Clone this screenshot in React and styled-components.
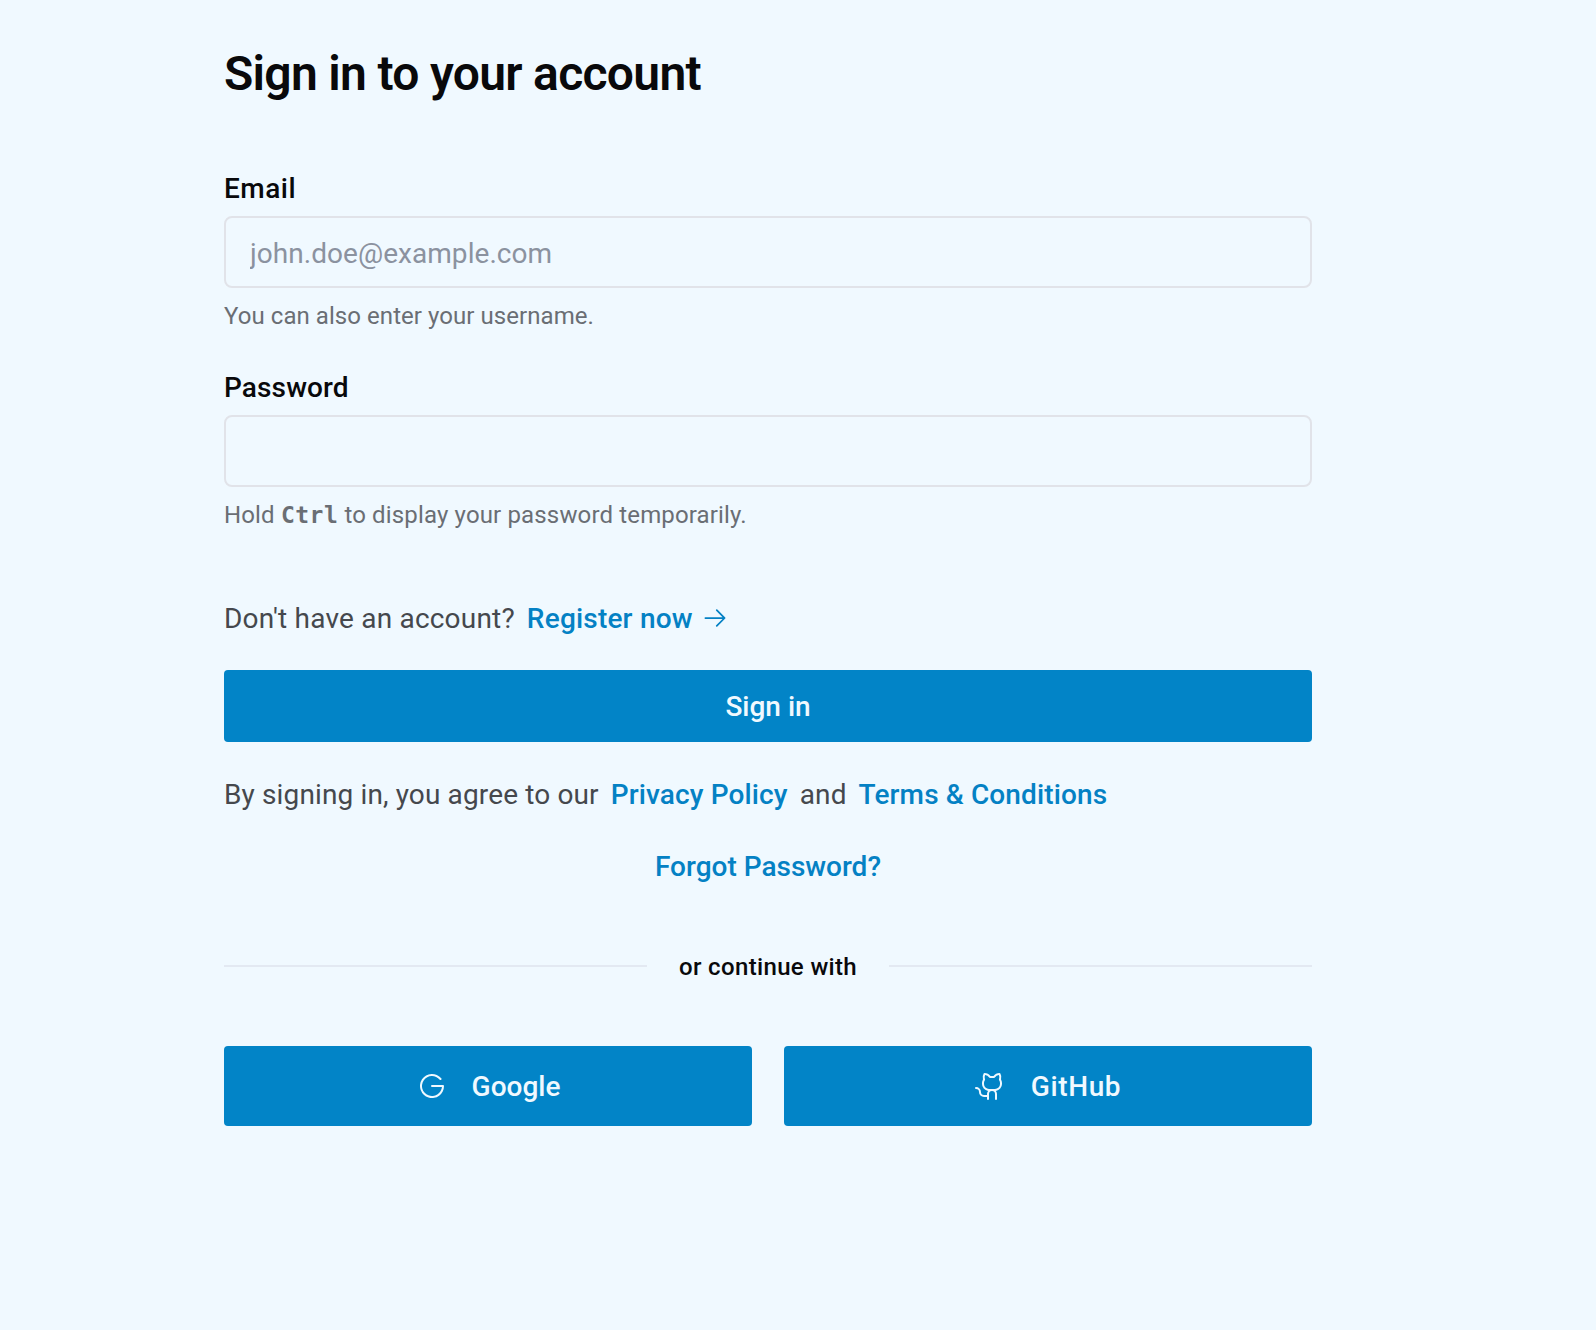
import React, { useState } from 'react';
import styled, { createGlobalStyle } from 'styled-components';
import { PiArrowRight, PiGithubLogo, PiGoogleLogo } from 'react-icons/pi';

const GlobalStyle = createGlobalStyle`
  * {
    box-sizing: border-box;
  }

  body {
    margin: 0;
    background-color: #f0f9ff;
    font-family: Roboto, 'Noto Sans', sans-serif;
  }
`;

// Styled Components
const Page = styled.main`
  min-height: 1330px;
  padding: 46px 284px 0 224px;
  background-color: #f0f9ff;
`;

const Form = styled.form`
  display: flex;
  flex-direction: column;
`;

const Title = styled.h1`
  margin: 0 0 73px;
  font-size: 48px;
  font-weight: 600;
  letter-spacing: -0.7px;
  line-height: 56px;
  color: #09090b;
`;

const Field = styled.div`
  display: flex;
  flex-direction: column;
  margin-bottom: ${props => (props.$last ? '69px' : '42px')};
`;

const Label = styled.label`
  margin-bottom: 13px;
  font-size: 28px;
  font-weight: 500;
  letter-spacing: ${props => props.$spacing || '0'};
  line-height: 28px;
  color: #09090b;
`;

const Input = styled.input`
  height: 72px;
  padding: 2px 24px 0;
  border: 2px solid #e1e3e9;
  border-radius: 8px;
  background-color: transparent;
  font-family: inherit;
  font-size: 28px;
  letter-spacing: 0.05px;
  color: #09090b;
  outline: none;

  &::placeholder {
    color: #8b929f;
    opacity: 1;
  }

  &:focus {
    border-color: #0284c7;
  }
`;

const Hint = styled.p`
  margin: 12px 0 0;
  font-size: 24px;
  letter-spacing: ${props => (props.$wide ? '0.15px' : '0.06px')};
  line-height: 32px;
  color: #6a6e74;
`;

const Key = styled.kbd`
  font-family: 'DejaVu Sans Mono', monospace;
  font-size: 23px;
  font-weight: 700;
  letter-spacing: 0.5px;
  line-height: 1;
`;

const TextRow = styled.div`
  display: flex;
  align-items: center;
  justify-content: ${props => (props.$center ? 'center' : 'flex-start')};
  gap: 12px;
  height: 36px;
  padding-top: 2px;
  font-size: 28px;
  letter-spacing: ${props => props.$spacing || '0'};
  line-height: 36px;
  color: #45484d;
`;

const Link = styled.a`
  display: inline-flex;
  align-items: center;
  gap: 8px;
  font-weight: 500;
  color: #0481c4;
  text-decoration: none;

  svg {
    margin-bottom: 2px;
  }

  &:hover {
    text-decoration: underline;
  }
`;

const Button = styled.button`
  display: flex;
  flex: none;
  align-items: center;
  justify-content: center;
  height: 72px;
  margin: 34px 0;
  padding: 0;
  border: none;
  border-radius: 4px;
  background-color: #0284c7;
  font-family: inherit;
  font-size: 28px;
  font-weight: 500;
  color: #f0f9ff;
  cursor: pointer;

  &:hover {
    background-color: #0369a1;
  }
`;

const SocialButton = styled(Button)`
  flex: 1;
  gap: 24px;
  height: 80px;
  margin: 0;
  letter-spacing: ${props => props.$spacing || '0'};
`;

const ForgotRow = styled(TextRow)`
  margin-top: 36px;
`;

const Divider = styled.div`
  display: flex;
  align-items: center;
  gap: 32px;
  margin: 67px 0 63px;
  font-size: 24px;
  font-weight: 500;
  letter-spacing: 0.35px;
  line-height: 32px;
  color: #09090b;

  &::before,
  &::after {
    content: '';
    flex: 1;
    height: 2px;
    margin-bottom: 2px;
    background-color: #e3e9f2;
  }
`;

const SocialRow = styled.div`
  display: flex;
  gap: 32px;
`;

const App = () => {
  const [email, setEmail] = useState('');
  const [password, setPassword] = useState('');
  const [showPassword, setShowPassword] = useState(false);

  const handleKey = (e) => {
    setShowPassword(e.ctrlKey);
  };

  return (
    <Page>
      <GlobalStyle />
      <Form onSubmit={(e) => e.preventDefault()}>
        <Title>Sign in to your account</Title>
        <Field>
          <Label htmlFor="email" $spacing="0.5px">Email</Label>
          <Input
            id="email"
            type="text"
            placeholder="john.doe@example.com"
            value={email}
            onChange={(e) => setEmail(e.target.value)}
          />
          <Hint>You can also enter your username.</Hint>
        </Field>
        <Field $last>
          <Label htmlFor="password" $spacing="0.13px">Password</Label>
          <Input
            id="password"
            type={showPassword ? 'text' : 'password'}
            value={password}
            onChange={(e) => setPassword(e.target.value)}
            onKeyDown={handleKey}
            onKeyUp={handleKey}
          />
          <Hint $wide>
            Hold <Key>Ctrl</Key> to display your password temporarily.
          </Hint>
        </Field>
        <TextRow $spacing="0.2px">
          <span>Don't have an account?</span>
          <Link href="#register">
            <span>Register now</span>
            <PiArrowRight size={28} />
          </Link>
        </TextRow>
        <Button type="submit">Sign in</Button>
        <TextRow $spacing="0.13px">
          <span>By signing in, you agree to our</span>
          <Link href="#privacy">Privacy Policy</Link>
          <span>and</span>
          <Link href="#terms">Terms &amp; Conditions</Link>
        </TextRow>
        <ForgotRow $center>
          <Link href="#forgot">Forgot Password?</Link>
        </ForgotRow>
        <Divider>or continue with</Divider>
        <SocialRow>
          <SocialButton type="button">
            <PiGoogleLogo size={32} />
            <span>Google</span>
          </SocialButton>
          <SocialButton type="button" $spacing="0.6px">
            <PiGithubLogo size={32} />
            <span>GitHub</span>
          </SocialButton>
        </SocialRow>
      </Form>
    </Page>
  );
};

export default App;
